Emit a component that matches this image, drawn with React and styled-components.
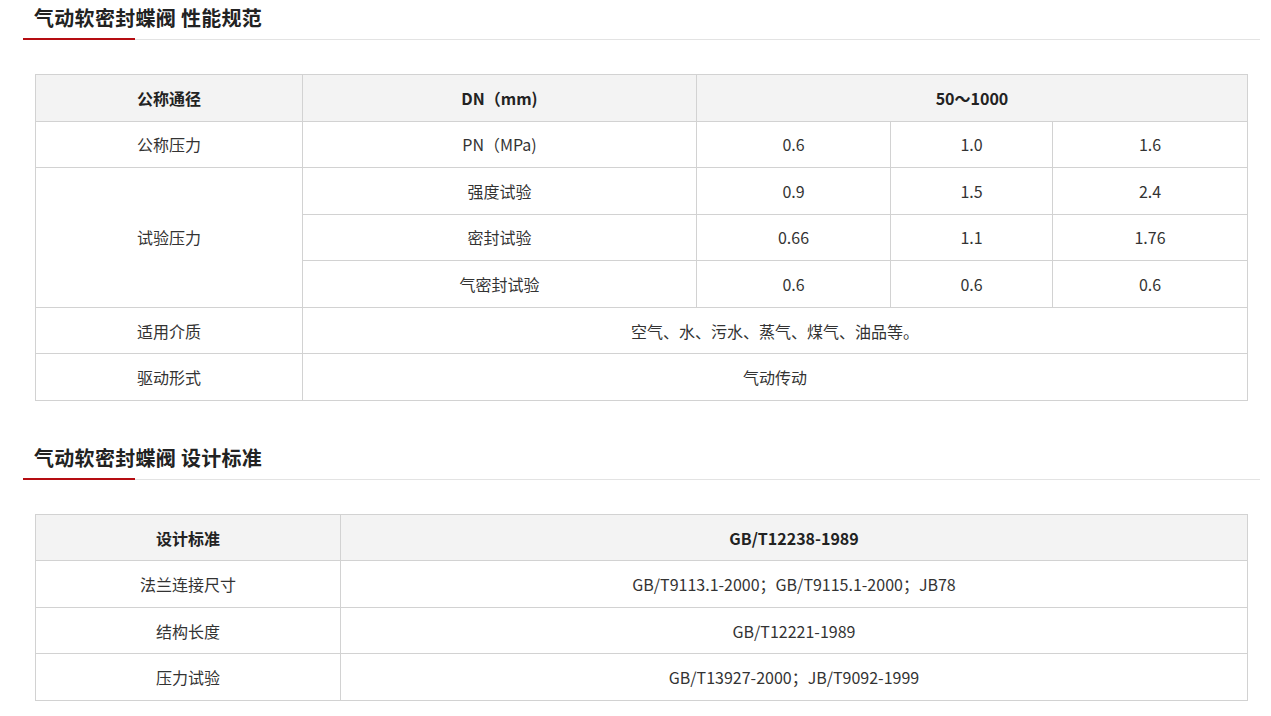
import React from "react";
import styled, { createGlobalStyle } from "styled-components";

const Global = createGlobalStyle`
  html, body { margin: 0; padding: 0; background: #fff; }
  body { font-family: "Noto Sans CJK SC", "Noto Sans", sans-serif; color: #333; }
`;

const Page = styled.div`
  width: 1237px;
  margin-left: 23px;
  padding-bottom: 20px;
`;

const Section = styled.section`
  margin-top: ${(p) => p.$top}px;
`;

const Title = styled.h2`
  position: relative;
  margin: 0;
  height: 39px;
  padding-left: 11px;
  font-size: 20px;
  font-weight: 700;
  line-height: 36px;
  letter-spacing: 0.3px;
  color: #222;
  border-bottom: 1px solid #e3e3e3;
  box-sizing: content-box;
  &::after {
    content: "";
    position: absolute;
    left: 0;
    bottom: -1px;
    width: 112px;
    height: 2px;
    background: #b50d12;
  }
`;

const Table = styled.table`
  margin: 34px 0 0 12px;
  width: 1212px;
  border-collapse: collapse;
  table-layout: fixed;
  font-size: 16px;
  color: #333;
`;

const Cell = styled.td`
  border: 1px solid #d2d2d2;
  height: 45.55px;
  padding: 0;
  text-align: center;
  vertical-align: middle;
  background: ${(p) => (p.$head ? "#f3f3f3" : "#fff")};
  font-weight: ${(p) => (p.$head ? 700 : 400)};
  color: ${(p) => (p.$head ? "#222" : "#333")};
`;

export default function App() {
  return (
    <>
      <Global />
      <Page>
        <Section $top={0}>
          <Title>气动软密封蝶阀 性能规范</Title>
          <Table>
            <colgroup>
              <col style={{ width: 267 }} />
              <col style={{ width: 394 }} />
              <col style={{ width: 194 }} />
              <col style={{ width: 162 }} />
              <col style={{ width: 195 }} />
            </colgroup>
            <tbody>
              <tr>
                <Cell $head>公称通径</Cell>
                <Cell $head>DN（mm)</Cell>
                <Cell $head colSpan={3}>50～1000</Cell>
              </tr>
              <tr>
                <Cell>公称压力</Cell>
                <Cell>PN（MPa)</Cell>
                <Cell>0.6</Cell>
                <Cell>1.0</Cell>
                <Cell>1.6</Cell>
              </tr>
              <tr>
                <Cell rowSpan={3}>试验压力</Cell>
                <Cell>强度试验</Cell>
                <Cell>0.9</Cell>
                <Cell>1.5</Cell>
                <Cell>2.4</Cell>
              </tr>
              <tr>
                <Cell>密封试验</Cell>
                <Cell>0.66</Cell>
                <Cell>1.1</Cell>
                <Cell>1.76</Cell>
              </tr>
              <tr>
                <Cell>气密封试验</Cell>
                <Cell>0.6</Cell>
                <Cell>0.6</Cell>
                <Cell>0.6</Cell>
              </tr>
              <tr>
                <Cell>适用介质</Cell>
                <Cell colSpan={4}>空气、水、污水、蒸气、煤气、油品等。</Cell>
              </tr>
              <tr>
                <Cell>驱动形式</Cell>
                <Cell colSpan={4}>气动传动</Cell>
              </tr>
            </tbody>
          </Table>
        </Section>
        <Section $top={39}>
          <Title>气动软密封蝶阀 设计标准</Title>
          <Table>
            <colgroup>
              <col style={{ width: 305 }} />
              <col style={{ width: 907 }} />
            </colgroup>
            <tbody>
              <tr>
                <Cell $head>设计标准</Cell>
                <Cell $head>GB/T12238-1989</Cell>
              </tr>
              <tr>
                <Cell>法兰连接尺寸</Cell>
                <Cell>GB/T9113.1-2000；GB/T9115.1-2000；JB78</Cell>
              </tr>
              <tr>
                <Cell>结构长度</Cell>
                <Cell>GB/T12221-1989</Cell>
              </tr>
              <tr>
                <Cell>压力试验</Cell>
                <Cell>GB/T13927-2000；JB/T9092-1999</Cell>
              </tr>
            </tbody>
          </Table>
        </Section>
      </Page>
    </>
  );
}
